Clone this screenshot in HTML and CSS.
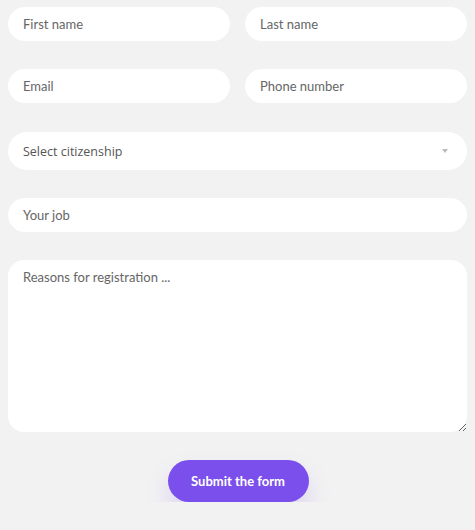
FILE: index.html
```html
<!DOCTYPE html>
<html lang="en">
<head>
<meta charset="utf-8">
<title>Registration form</title>
<link rel="stylesheet" href="styles.css">
</head>
<body>
<form class="form">
  <div class="row">
    <input class="field" type="text" placeholder="First name">
    <input class="field" type="text" placeholder="Last name">
  </div>
  <div class="row">
    <input class="field" type="email" placeholder="Email">
    <input class="field" type="tel" placeholder="Phone number">
  </div>
  <div class="select-wrap">
    <select class="select">
      <option>Select citizenship</option>
    </select>
    <span class="arrow"></span>
  </div>
  <input class="field wide" type="text" placeholder="Your job">
  <textarea class="area" placeholder="Reasons for registration ..."></textarea>
  <div class="actions">
    <button class="submit" type="button">Submit the form</button>
  </div>
</form>
</body>
</html>
```
FILE: styles.css
```css
html, body {
  margin: 0;
  padding: 0;
  background: #f2f2f2;
}
body {
  font-family: "Lato", "Open Sans", sans-serif;
}
.form {
  display: flex;
  flex-direction: column;
  padding: 7px 8px 0 8px;
}
.row {
  display: grid;
  grid-template-columns: 222px 222px;
  column-gap: 15px;
  margin-bottom: 28px;
}
.field {
  box-sizing: border-box;
  height: 34px;
  border: none;
  border-radius: 17px;
  background: #fff;
  padding: 0 15px;
  font-family: "Lato", "Open Sans", sans-serif;
  font-size: 13px;
  color: #555;
  outline: none;
}
.field::placeholder, .area::placeholder {
  color: #666;
  opacity: 1;
}
.select-wrap {
  position: relative;
  margin-top: 1px;
  margin-bottom: 28px;
}
.select {
  box-sizing: border-box;
  width: 459px;
  height: 38px;
  border: none;
  border-radius: 19px;
  background: #fff;
  padding: 0 15px;
  font-family: "Open Sans", sans-serif;
  font-size: 12.5px;
  color: #555;
  appearance: none;
  -webkit-appearance: none;
  outline: none;
}
.arrow {
  position: absolute;
  right: 19px;
  top: 17px;
  width: 0;
  height: 0;
  border-left: 3px solid transparent;
  border-right: 3px solid transparent;
  border-top: 4px solid #bbb;
}
.wide {
  width: 459px;
  margin-bottom: 28px;
}
.area {
  box-sizing: border-box;
  width: 459px;
  height: 172px;
  border: none;
  border-radius: 16px;
  background: #fff;
  padding: 9px 15px;
  font-family: "Lato", "Open Sans", sans-serif;
  font-size: 13px;
  color: #555;
  outline: none;
  resize: vertical;
}
.actions {
  display: flex;
  justify-content: center;
  margin-top: 28px;
}
.submit {
  width: 141px;
  height: 42px;
  border: none;
  border-radius: 21px;
  background: #7b4fec;
  color: #fff;
  font-family: "Lato", "Open Sans", sans-serif;
  font-weight: 700;
  font-size: 13px;
  box-shadow: 0 14px 24px rgba(123, 79, 236, 0.18);
  margin-left: 1px;
}
```
